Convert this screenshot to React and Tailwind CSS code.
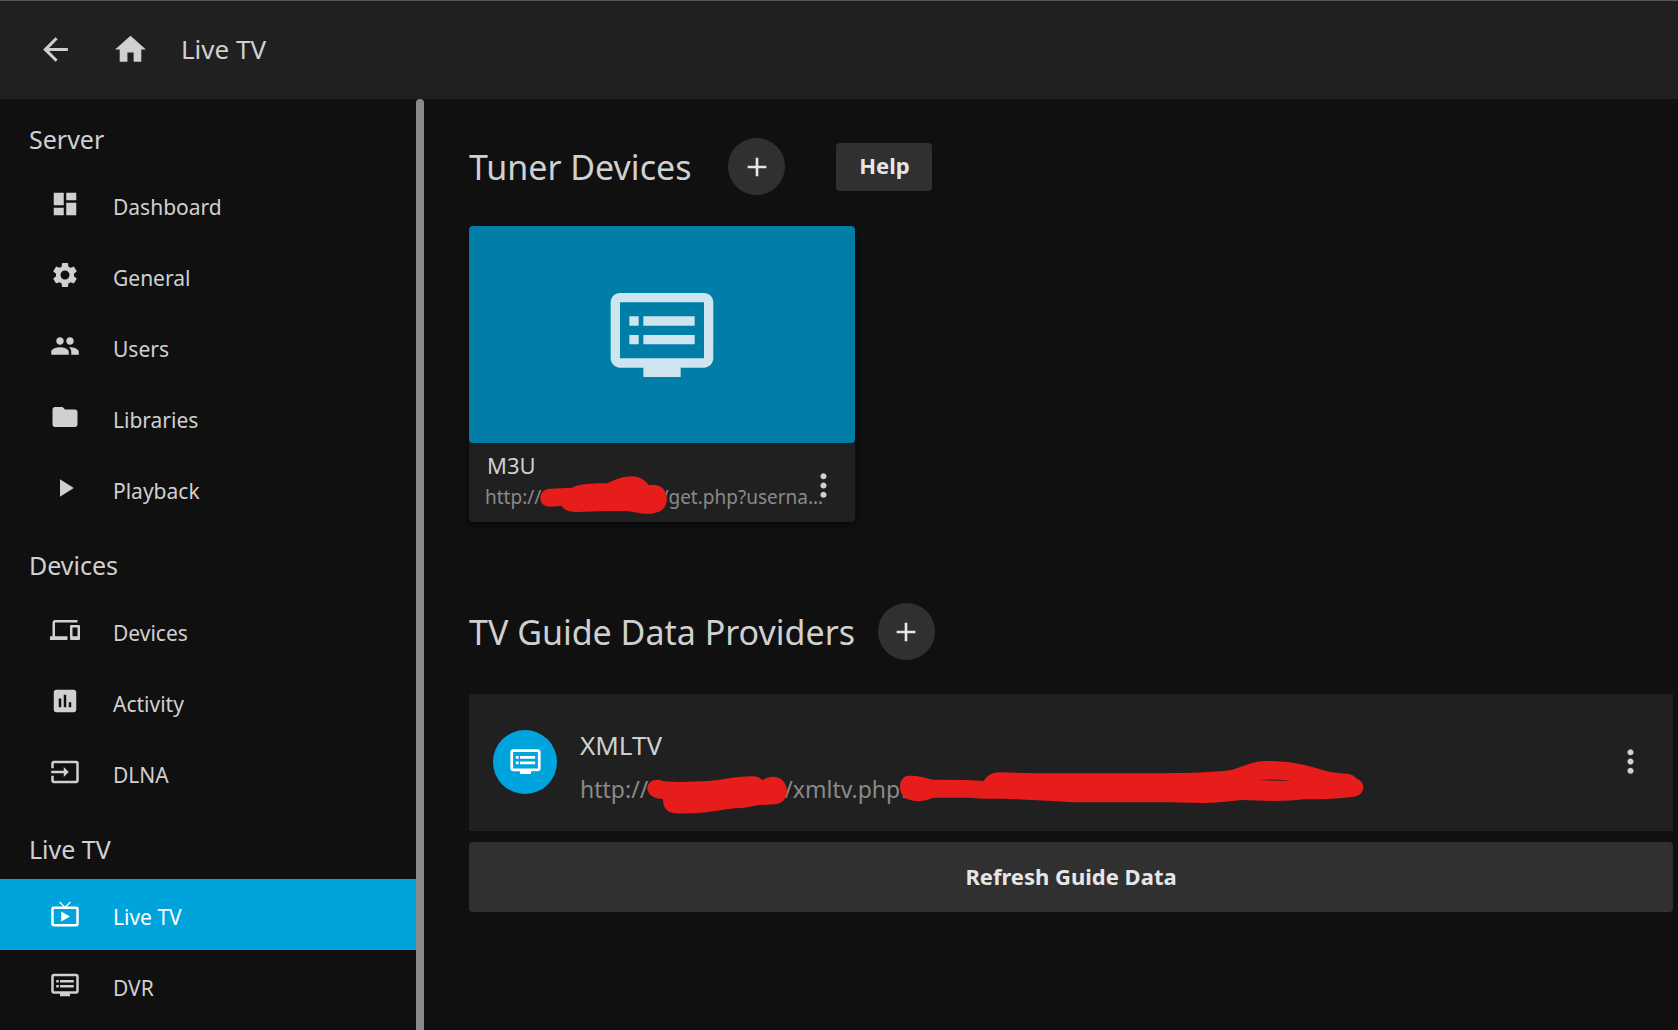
import {
  MdAdd,
  MdArrowBack,
  MdAssessment,
  MdDashboard,
  MdDevices,
  MdDvr,
  MdFolder,
  MdHome,
  MdInput,
  MdLiveTv,
  MdMoreVert,
  MdPeople,
  MdPlayArrow,
  MdSettings,
} from "react-icons/md";

const sections = [
  {
    title: "Server",
    items: [
      { label: "Dashboard", icon: MdDashboard },
      { label: "General", icon: MdSettings },
      { label: "Users", icon: MdPeople },
      { label: "Libraries", icon: MdFolder },
      { label: "Playback", icon: MdPlayArrow },
    ],
  },
  {
    title: "Devices",
    items: [
      { label: "Devices", icon: MdDevices },
      { label: "Activity", icon: MdAssessment },
      { label: "DLNA", icon: MdInput },
    ],
  },
  {
    title: "Live TV",
    items: [
      { label: "Live TV", icon: MdLiveTv, active: true },
      { label: "DVR", icon: MdDvr },
    ],
  },
];

function Header() {
  return (
    <header className="flex h-[99px] shrink-0 items-center border-t border-[#56595c] bg-[#202020] pb-0.5 pl-[37px]">
      <button type="button" aria-label="Back">
        <MdArrowBack className="size-[37px]" />
      </button>
      <button type="button" aria-label="Home" className="ml-[38px]">
        <MdHome className="size-[37px]" />
      </button>
      <h1 className="ml-8 text-[26px] leading-9">Live TV</h1>
    </header>
  );
}

function NavItem({ label, icon: Icon, active }) {
  return (
    <li>
      <a
        href="#"
        aria-current={active ? "page" : undefined}
        className={
          active
            ? "flex h-[71px] items-center gap-[33px] bg-[#00a4dc] pl-[50px] text-white"
            : "flex h-[71px] items-center gap-[33px] pl-[50px]"
        }
      >
        <Icon className="mb-0.5 size-[30px] shrink-0" />
        <span className="pt-1 text-[21px] leading-8">{label}</span>
      </a>
    </li>
  );
}

function Sidebar() {
  return (
    <nav className="flex w-[416px] shrink-0 flex-col gap-px">
      {sections.map((section) => (
        <section key={section.title}>
          <h2 className="flex h-[70px] items-center pt-2.5 pl-[29px] text-[25px] leading-9">{section.title}</h2>
          <ul>
            {section.items.map((item) => (
              <NavItem key={item.label} {...item} />
            ))}
          </ul>
        </section>
      ))}
    </nav>
  );
}

function AddButton({ label }) {
  return (
    <button
      type="button"
      aria-label={label}
      className="flex size-[57px] items-center justify-center rounded-full bg-[#303030] text-[#e6e6e6]"
    >
      <MdAdd className="size-8" />
    </button>
  );
}

function Scribble({ className, viewBox, d }) {
  return (
    <svg className={className} viewBox={viewBox} fill="#e71d1c" fillRule="evenodd" aria-hidden="true">
      <path d={d} />
    </svg>
  );
}

function TunerCard() {
  return (
    <article className="relative mt-[31px] w-[386px] rounded bg-[#202020] shadow-md shadow-black/40">
      <a href="#" aria-label="M3U" className="flex h-[217px] items-center justify-center rounded bg-[#007ea8] text-[#cce5ee]">
        <MdDvr className="size-[112px]" />
      </a>
      <div className="h-[79px] pt-1.5 pl-4">
        <div className="pl-0.5 text-[22px] leading-8">M3U</div>
        <div className="text-[19px] leading-8 whitespace-nowrap text-[#8a8a8a]">
          http://
          <span className="relative inline-block w-[120px]">
            <Scribble
              className="absolute -top-[28px] -left-[1px] h-[38px] w-[128px]"
              viewBox="242 169 384 114"
              d="M243 235C243 220 253 208 272 207L338 204C358 194 385 191 442 191C465 183 485 170 517 170C540 170 558 182 569 197C595 192 614 202 620 222C625 240 622 256 612 267C600 278 580 283 560 282C535 281 518 275 500 274L440 274L355 277C330 277 315 272 307 259L272 261C254 261 243 250 243 235Z"
            />
          </span>
          /get.php?userna…
        </div>
      </div>
      <button type="button" aria-label="More options for M3U" className="absolute right-[13px] bottom-[18px]">
        <MdMoreVert className="size-[37px]" />
      </button>
    </article>
  );
}

function ProviderRow() {
  return (
    <div className="mt-[34px] flex h-[137px] items-center bg-[#202020] px-6 pb-0.5">
      <div className="flex size-16 shrink-0 items-center justify-center rounded-full bg-[#00a4dc] text-white">
        <MdDvr className="size-[33px]" />
      </div>
      <div className="ml-[23px] flex-1 pt-3">
        <div className="text-[26px] leading-9">XMLTV</div>
        <div className="mt-1.5 text-[23px] leading-10 whitespace-nowrap text-[#8a8a8a]">
          http://
          <span className="relative inline-block w-[136px]">
            <Scribble
              className="absolute -top-[22px] -left-[1px] h-[38px] w-[140px]"
              viewBox="558 254 420 114"
              d="M559 290C560 274 574 264 592 265C600 266 604 269 608 270L655 272L745 269C790 265 830 255 870 255C888 255 898 259 904 267C915 259 925 256 938 256C962 257 977 275 978 298C978 322 962 338 940 339L895 341L845 350L820 351L735 363C705 367 670 367 645 366C620 366 605 350 606 323C580 323 559 310 559 290Z"
            />
          </span>
          /xmltv.php
          <span className="relative inline-block">
            ?
            <Scribble
              className="absolute -top-2 left-0 h-[42px] w-[464px]"
              viewBox="-6 64 1392 126"
              d="M-6 142C-6 122 5 107 22 108C50 108 70 114 92 120L195 121L246 124C254 108 272 98 295 98L400 101L790 101C860 100 930 98 983 92C1030 80 1050 64 1095 64C1130 64 1160 67 1177 70C1230 79 1260 92 1290 98L1340 103C1355 106 1360 112 1365 118C1377 122 1384 132 1384 144C1383 160 1370 170 1350 172C1300 178 1250 179 1205 179C1150 186 1100 184 1018 181C960 188 930 190 900 190L800 188L515 188L440 183L300 177L240 177L200 174L92 174C75 183 60 184 45 184C15 184 -6 170 -6 142ZM1070 122Q1120 116 1170 124Q1120 122 1070 122Z"
            />
          </span>
        </div>
      </div>
      <button type="button" aria-label="More options for XMLTV">
        <MdMoreVert className="size-[37px]" />
      </button>
    </div>
  );
}

export default function App() {
  return (
    <div className="flex min-h-screen flex-col bg-[#101010] font-['Noto_Sans',sans-serif] text-[#d0d0d0]">
      <Header />
      <div className="flex flex-1">
        <Sidebar />
        <div className="w-2 shrink-0 rounded-t bg-[#8a8a8a]" />
        <main className="min-w-0 flex-1 pt-[39px] pr-[5px] pl-[45px]">
          <section>
            <div className="flex items-center">
              <h2 className="mr-[37px] text-[34px] leading-[46px]">Tuner Devices</h2>
              <AddButton label="Add tuner device" />
              <button
                type="button"
                className="ml-[51px] h-12 min-w-24 rounded bg-[#303030] px-5 pb-0.5 text-[22px] font-bold text-[#e6e6e6]"
              >
                Help
              </button>
            </div>
            <TunerCard />
          </section>
          <section className="mt-[81px]">
            <div className="flex items-center">
              <h2 className="mr-[23px] text-[34px] leading-[46px]">TV Guide Data Providers</h2>
              <AddButton label="Add TV guide data provider" />
            </div>
            <ProviderRow />
            <button
              type="button"
              className="mt-[11px] h-[70px] w-full rounded bg-[#303030] pb-0.5 text-[22px] font-bold text-[#e6e6e6]"
            >
              Refresh Guide Data
            </button>
          </section>
        </main>
      </div>
    </div>
  );
}
